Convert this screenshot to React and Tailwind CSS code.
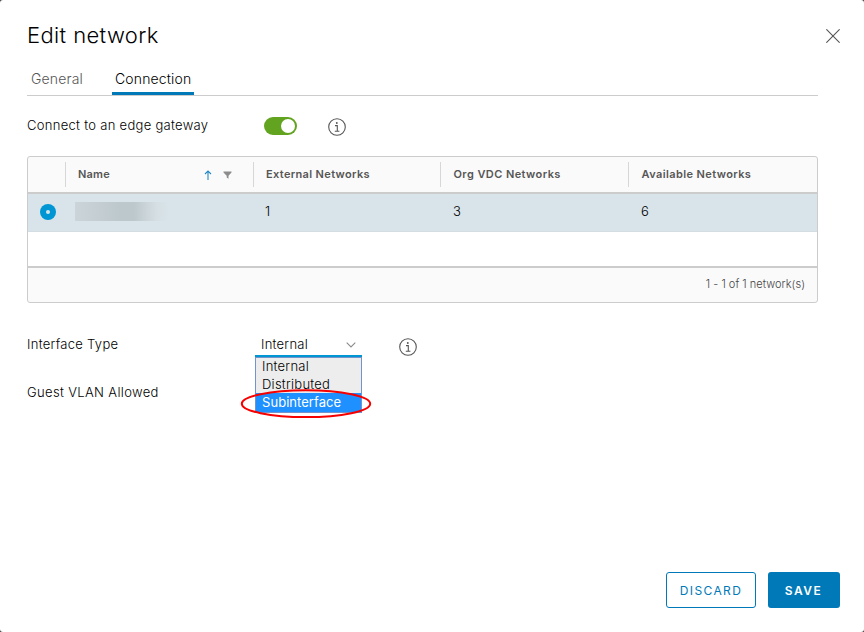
import React from "react";

function InfoIcon() {
  return (
    <svg width="18" height="18" viewBox="0 0 18 18" fill="none" stroke="#565656" className="block shrink-0">
      <circle cx="9" cy="9" r="8.3" strokeWidth="1.1" />
      <circle cx="8.8" cy="5" r="0.95" fill="#565656" stroke="none" />
      <path d="M7 7.6h2.3v5.6M6.8 13.3h4.6" strokeWidth="1.1" />
    </svg>
  );
}

function Column({ label, children, className }) {
  return (
    <div className={`flex h-[25px] items-center border-l border-[#d7d7d7] text-[11px] font-semibold text-[#565656] ${className}`}>
      <span className="whitespace-nowrap">{label}</span>
      {children}
    </div>
  );
}

function Header() {
  return (
    <header className="flex h-[62px] items-start justify-between pr-6 pl-[27px]">
      <h1 className="mt-[19px] text-[22px] leading-8 font-light tracking-[0.38px] text-black">Edit network</h1>
      <svg width="14" height="14" viewBox="0 0 14 14" className="mt-[29px]" stroke="#565656" strokeWidth="1.1" strokeLinecap="round">
        <path d="M0.7 0.7l12.6 12.6M13.3 0.7L0.7 13.3" />
      </svg>
    </header>
  );
}

function Tabs() {
  return (
    <nav className="mr-[46px] ml-[27px] flex h-[34px] border-b border-[#ccc] text-[14px] leading-[34px]">
      <span className="ml-1 w-[81px] font-light tracking-[0.15px] text-[#565656]">General</span>
      <span className="h-[33px] w-[82px] border-b-[3px] border-[#0079b8] pl-[3px] font-light tracking-[0.14px] text-black">Connection</span>
    </nav>
  );
}

function NetworkGrid() {
  return (
    <section className="mr-[46px] ml-[27px] h-[147px] overflow-hidden rounded-[3px] border border-[#ccc] bg-[#fafafa]">
      <div className="flex h-[37px] items-center border-b-2 border-[#ccc] pl-[37px]">
        <Column label="Name" className="w-[188px] pl-3 tracking-[0.2px]">
          <svg width="8" height="10" viewBox="0 0 8 10" fill="none" stroke="#2389c5" strokeWidth="1.1" className="ml-auto">
            <path d="M4 10V1M1 4l3-3 3 3" />
          </svg>
          <svg width="9" height="8" viewBox="0 0 9 8" fill="#8c8c8c" className="mr-[21px] ml-[11px]">
            <path d="M0.5 0.5h8v1L5.5 4.7v3L3.7 6.5V4.7L0.5 1.5z" />
          </svg>
        </Column>
        <Column label="External Networks" className="w-[187px] pl-3 tracking-[0.34px]" />
        <Column label="Org VDC Networks" className="w-[188px] pl-[12.5px] tracking-[0.42px]" />
        <Column label="Available Networks" className="pl-[12.5px] tracking-[0.4px]" />
      </div>
      <div className="flex h-[38px] items-center border-b border-[#d4dde2] bg-[#d9e4ea] pb-px pl-3 text-[13px] text-black">
        <span className="flex size-4 items-center justify-center rounded-full bg-[#0095d3]">
          <span className="size-1 rounded-full bg-[#d9e4ea]" />
        </span>
        <span className="mb-px ml-[19px] h-[19px] w-[190px] bg-[linear-gradient(90deg,#cbd4d9_0px,#bdc8cd_45px,#bdc8cd_59px,#cbd5da_72px,#d5dfe4_82px,#d9e4ea_95px)]" />
        <span className="w-[188px] font-light">1</span>
        <span className="w-[188px] font-light">3</span>
        <span className="font-light">6</span>
      </div>
      <div className="h-[36px] border-b-2 border-[#ccc] bg-white" />
      <div className="pr-3 text-right text-[11px] leading-[33px] font-light tracking-[0.03px] text-[#454545]">1 - 1 of 1 network(s)</div>
    </section>
  );
}

function InterfaceSelect() {
  return (
    <div className="relative w-[107px] tracking-[0.25px]">
      <div className="flex h-[24px] items-center justify-between border-b-2 border-[#0095d3] pr-[6px] pl-[6px]">
        <span className="leading-5">Internal</span>
        <svg width="10" height="6" viewBox="0 0 10 6" fill="none" stroke="#8c8c8c" strokeWidth="1.1" className="mt-px">
          <path d="M0.7 0.7L5 5L9.3 0.7" />
        </svg>
      </div>
      <ul className="absolute top-6 left-0 w-[107px] border border-[#7393ca] bg-[#ededed] leading-[18px] text-black">
        <li className="h-[17px] pl-[6px] leading-4">Internal</li>
        <li className="pl-[6px]">Distributed</li>
        <li className="h-[19px] bg-[#1e90ff] pl-[6px] font-normal tracking-[0.05px] text-white">Subinterface</li>
      </ul>
      <svg width="132" height="30" viewBox="0 0 132 30" fill="none" className="absolute top-[56px] -left-[15px]">
        <ellipse cx="66" cy="14.7" rx="64.2" ry="13.4" stroke="#f60000" strokeWidth="2" />
      </svg>
    </div>
  );
}

export default function App() {
  return (
    <div className="h-[632px] w-[864px] overflow-hidden bg-[#444]">
      <main className="flex h-full flex-col rounded-[3px] bg-white font-[Inter,'Liberation_Sans',sans-serif] text-[13px] font-light text-black">
        <Header />
        <Tabs />
        <div className="flex h-[60px] items-start pl-[27px]">
          <span className="mt-[19px] w-[237px] leading-5 tracking-[0.3px]">Connect to an edge gateway</span>
          <span className="mt-[21px] flex h-[18px] w-[33px] items-center justify-end rounded-full bg-[#62a420] pr-[2px]">
            <span className="size-[14px] rounded-full bg-white" />
          </span>
          <span className="mt-[22px] ml-[31px]"><InfoIcon /></span>
        </div>
        <NetworkGrid />
        <div className="mt-[30px] flex h-[48px] items-start pl-[27px]">
          <span className="w-[228px] leading-[22px] tracking-[0.3px]">Interface Type</span>
          <InterfaceSelect />
          <span className="mt-[5px] ml-[37px]"><InfoIcon /></span>
        </div>
        <div className="pl-[27px] leading-[22px] tracking-[0.35px]">Guest VLAN Allowed</div>
        <footer className="mt-auto mb-6 flex justify-end gap-3 pr-6 text-[12px]">
          <button className="h-9 w-[90px] rounded-[3px] border border-[#0079b8] pt-px font-normal tracking-[1.4px] text-[#0079b8]">DISCARD</button>
          <button className="h-9 w-[72px] rounded-[3px] bg-[#0079b8] pt-px pr-px font-semibold tracking-[1.5px] text-white">SAVE</button>
        </footer>
      </main>
    </div>
  );
}
